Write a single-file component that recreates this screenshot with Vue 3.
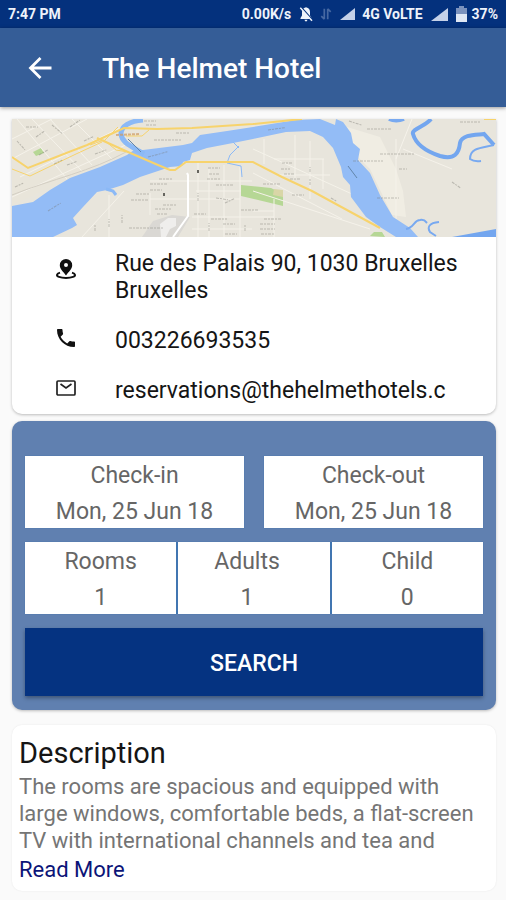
<script setup>
import { ref } from 'vue';

const hotel = {
  name: 'The Helmet Hotel',
  address: 'Rue des Palais 90, 1030 Bruxelles Bruxelles',
  phone: '003226693535',
  email: 'reservations@thehelmethotels.c',
};

const dates = ref([
  { label: 'Check-in', value: 'Mon, 25 Jun 18' },
  { label: 'Check-out', value: 'Mon, 25 Jun 18' },
]);
const guests = ref([
  { label: 'Rooms', value: 1 },
  { label: 'Adults', value: 1 },
  { label: 'Child', value: 0 },
]);

// faint street labels: x, y, length, angle
const labels = [
  [14, 8, 12, 0], [5, 22, 12, 48], [24, 18, 10, -35], [40, 6, 14, 40], [58, 8, 12, -35], [27, 36, 10, -30],
  [72, 22, 10, -25], [42, 45, 9, -25], [55, 46, 10, -20], [83, 35, 12, -20], [3, 68, 9, -25], [132, 2, 12, 0],
  [134, 6, 10, 0], [164, 14, 14, 0], [142, 21, 28, 0], [147, 60, 14, 0], [138, 65, 18, 0], [138, 71, 12, 0],
  [124, 75, 13, 0], [119, 81, 17, 0], [196, 49, 12, 0], [197, 55, 11, 0], [195, 60, 14, 0], [204, 66, 18, 0],
  [151, 86, 14, 0], [143, 90, 16, 0], [145, 95, 10, 0], [182, 95, 12, 0], [199, 100, 16, 0], [211, 105, 12, 0],
  [204, 79, 12, 8], [213, 84, 10, -25], [229, 91, 18, 0], [213, 115, 12, 0], [117, 109, 34, 0], [186, 82, 8, -90],
  [97, 108, 8, -90], [83, 112, 7, -90], [110, 104, 8, -90], [197, 112, 8, -90], [233, 112, 7, -90],
  [270, 44, 10, 0], [269, 50, 9, 0], [272, 55, 11, 0], [278, 60, 11, 0], [251, 65, 17, 0], [280, 76, 12, 0],
  [298, 53, 5, -90], [298, 66, 7, -90], [319, 79, 7, 30], [252, 100, 18, 0], [248, 105, 15, 0], [248, 110, 15, 0],
  [249, 115, 14, 0], [337, 2, 14, 18], [355, 10, 24, 0], [368, 35, 34, 0], [341, 42, 30, 0], [387, 50, 8, 0],
  [365, 79, 22, 0], [440, 63, 10, 35], [448, 3, 20, 0], [256, 11, 18, -8], [136, 38, 20, -15], [36, 92, 15, -32],
];
</script>

<template>
  <div class="screen">
    <div class="status">
      <span>7:47 PM</span>
      <div class="status-right">
        <span class="speed">0.00K/s</span>
        <svg class="bell" width="15" height="16" viewBox="0 0 15 16" aria-hidden="true">
          <path d="M7 1.2c-3 .5-4 2.700-4 5v3.300L1.500 12v1h11v-1L11 9.500V6.200c0-2.300-1-4.500-4-5z" fill="#eef3fb" />
          <path d="M5.500 13.800h3q-.3 1.700-1.500 1.700t-1.500-1.700z" fill="#eef3fb" />
          <path d="M2.500 1.500l11.500 13" stroke="#04317d" stroke-width="1.500" />
          <path d="M1.300 1.800l11.700 13" stroke="#eef3fb" stroke-width="1.500" />
        </svg>
        <svg class="updown" width="12" height="14" viewBox="0 0 14 14" fill="none" stroke="#4668a2" stroke-width="2" aria-hidden="true">
          <path d="M5 1v12M5 13L1.500 9.500M9 13V1M9 1l3.500 3.500" />
        </svg>
        <svg class="signal" width="15" height="12" viewBox="0 0 16 12" preserveAspectRatio="none" aria-hidden="true"><path d="M0 12L16 0v12z" fill="#c5d1e8" /></svg>
        <span class="network">4G VoLTE</span>
        <svg class="signal" width="17" height="13" viewBox="0 0 17 13" aria-hidden="true"><path d="M0 13L17 0v13z" fill="#c5d1e8" /></svg>
        <svg class="battery" width="11" height="16" viewBox="0 0 11 16" aria-hidden="true">
          <path d="M3 0h5v2h3v6H0V2h3z" fill="#7b92bd" />
          <path d="M0 8h11v8H0z" fill="#dfe7f4" />
        </svg>
        <span>37%</span>
      </div>
    </div>

    <header class="bar">
      <button class="back" type="button" aria-label="Back">
        <svg width="24" height="24" viewBox="0 0 24 24" fill="none" stroke="#fff" stroke-width="2.800">
          <path d="M23.500 12H2.500M12.500 2L2.500 12l10 10" />
        </svg>
      </button>
      <h1>{{ hotel.name }}</h1>
    </header>

    <main>
      <section class="card contact">
        <svg class="map" viewBox="0 0 484 118" preserveAspectRatio="xMidYMid slice" role="img" aria-label="Map">
          <rect width="484" height="118" fill="#e8e5dc" />
          <path d="M0 0H130L115 34L0 86z" fill="#e9e5da" />
          <path d="M335 8L368 18L384 50L391 72L394 98L380 96L358 50L346 38z" fill="#f0ede3" />
          <path d="M141 102L160 96L178 98L166 118H130z" fill="#dad8d4" />
          <path d="M148 105l8-6h8v8l-6 3-4 8h-5z" fill="#efeeec" />
          <path d="M21 33l8-4 3 5-8 3zM229 66l30 3 12 6v12l-42-10zM358 117l4-4h8l3 5z" fill="#b6d795" />
          <path d="M262 70l9 1v7l-10-2z" fill="#d9d6a7" />
          <g fill="none" stroke="#f5f2ea" stroke-width="1">
            <path d="M5 0L55 60M20 0L70 52M38 0L80 46M60 0L100 40M0 20L40 0M0 40L75 0M8 58L110 8M0 78L118 24" />
            <path d="M138 62H240M138 74V96M97 76V118M70 118L112 72M186 44V118M197 50V118M212 46V118M228 48V118M138 80H228M180 98H262M184 72H229M180 110H240" />
            <path d="M241 30L340 75M252 20V45M283 16V60M298 22V80M311 40V70M262 40H312M265 56H318M241 54L330 100M241 72L358 110M262 80V118M241 92H262" />
            <path d="M384 20V100M391 30L440 50M400 0L384 40" />
          </g>
          <path d="M0 76C40 60 80 52 114 33" fill="none" stroke="#d3cec3" stroke-width="1" />
          <path d="M175 54l1 2v41l-15 21" fill="none" stroke="#fff" stroke-width="2" />
          <path
            d="M0 87L21 83L38 71L58 59L88 48L115 36L122 31L131 31L171 26L180 24L188 16L215 12L241 8L284 1L308 0L323 6L324 0L331 3L339 14L341 24L348 30L346 41L358 54L368 76L381 98L398 109L406 118H384L368 108L354 98L339 78L338 66L331 58L329 48L321 29L311 18L298 12L274 13L241 20L221 24L195 29L180 34L178 41L171 43L170 47L158 48L128 58L111 66L95 71L85 73L71 88L61 99L65 106L60 109L41 118H0z"
            fill="#93bcf6"
          />
          <g fill="none" stroke="#8bb9f6">
            <path d="M131 1C118 2 109 7 109 15C110 24 119 27 132 35" stroke-width="5" />
            <path d="M94 70l7 2 3 4" stroke-width="3" />
            <path d="M221 23l6 6M227 27l-9 9-3 8 14 3 1 11" stroke-width="1" />
            <path d="M377 0q7 3 15 0" stroke-width="4" stroke="#78a9f0" />
            <path d="M419 0C414 7 399 10 401 15C404 26 416 33 428 37C443 41 447 34 448 24C450 15 465 16 472 15L482 26" stroke-width="4" stroke="#73a6ef" />
            <path d="M482 26C468 29 458 29 458 40q4 3 11 2" stroke-width="2" stroke="#78a9f0" />
            <path d="M394 110C402 109 402 101 408 101C413 100 414 103 415 104M427 103c-10 1-12 5-9 10l6 4" stroke-width="2" stroke="#78a9f0" />
          </g>
          <path d="M440 118L484 110v8z" fill="#73a6ef" />
          <g fill="none" stroke="#f7d36c" stroke-width="2">
            <path d="M0 38L16 49L75 26L112 9L145 10L180 9L241 5L290 0" />
            <path d="M0 50L18 57L64 35L90 23M114 17H130L137 11" stroke-width="1" />
            <path d="M85 19L116 33L146 46L158 51H163L174 43H241L270 58L300 72L368 109" />
            <path d="M78 26l14-5 12 10 12 2M92 22l14-14" stroke-width="1" />
            <path d="M472 0h12" />
          </g>
          <path d="M104 16l24-1" stroke="#cf9a62" stroke-width="2" stroke-dasharray="3 1" opacity="0.7" />
          <path d="M116 20l13 13M336 47l9 12" stroke="#6285aa" stroke-width="1" />
          <g stroke="#77766f" stroke-width="1" stroke-dasharray="3 1 2 1" opacity="0.4">
            <line
              v-for="(l, i) in labels"
              :key="i"
              :x1="l[0]"
              :y1="l[1]"
              :x2="l[0] + l[2]"
              :y2="l[1]"
              :transform="`rotate(${l[3]} ${l[0]} ${l[1]})`"
            />
          </g>
          <path d="M185 51h2v3h-2zM151 74h2v3h-2z" fill="#66655f" />
        </svg>

        <address class="details">
          <div class="detail">
            <svg class="icon" width="20" height="20" viewBox="0 0 20 20" aria-hidden="true">
              <path d="M10 0a6.200 6.200 0 0 0-6.200 6.200c0 4.300 3.700 6.300 6.200 10.300 2.500-4 6.200-6 6.200-10.300A6.200 6.200 0 0 0 10 0zm0 4a2 2 0 1 1 0 4 2 2 0 0 1 0-4z" fill-rule="evenodd" />
              <path d="M4 13.600C0 14.800.3 17 3 17.900c3.500 1.300 10.500 1.300 14 0 2.700-.9 3-3.100-1-4.300" fill="none" stroke="#111" stroke-width="2" />
            </svg>
            <span>{{ hotel.address }}</span>
          </div>
          <div class="detail">
            <svg class="icon" width="20" height="20" viewBox="2 2 20 20" aria-hidden="true">
              <path d="M6.620 10.790c1.440 2.830 3.760 5.140 6.590 6.590l2.200-2.200c.27-.27.670-.36 1.020-.24 1.120.37 2.330.57 3.570.57.550 0 1 .45 1 1V20c0 .55-.45 1-1 1-9.390 0-17-7.610-17-17 0-.55.450-1 1-1h3.500c.55 0 1 .45 1 1 0 1.250.2 2.450.57 3.570.11.350.030.740-.25 1.020l-2.200 2.200z" />
            </svg>
            <a :href="`tel:${hotel.phone}`">{{ hotel.phone }}</a>
          </div>
          <div class="detail">
            <svg class="icon" width="20" height="20" viewBox="0 0 20 20" fill="none" stroke="#222" aria-hidden="true">
              <rect x="1" y="3" width="18" height="14" rx="1" stroke-width="1.700" />
              <path d="M4.500 6l5.500 4 5.500-4" stroke-width="1.700" />
            </svg>
            <a :href="`mailto:${hotel.email}`">{{ hotel.email }}</a>
          </div>
        </address>
      </section>

      <section class="card booking">
        <div class="dates">
          <button v-for="d in dates" :key="d.label" class="field" type="button">
            <span>{{ d.label }}</span>
            <span>{{ d.value }}</span>
          </button>
        </div>
        <div class="guests">
          <button v-for="g in guests" :key="g.label" class="field" type="button">
            <span>{{ g.label }}</span>
            <span>{{ g.value }}</span>
          </button>
        </div>
        <button class="search" type="button">SEARCH</button>
      </section>

      <section class="card description">
        <h2>Description</h2>
        <p>The rooms are spacious and equipped with large windows, comfortable beds, a flat-screen TV with international channels and tea and</p>
        <a href="#">Read More</a>
      </section>
    </main>
  </div>
</template>

<style>
body { margin: 0; background: #fafafa; }
</style>

<style scoped>
.screen { min-height: 100vh; background: #fafafa; color: #151515; font-family: Roboto, sans-serif; font-size: 23px; line-height: 27px; }
button { margin: 0; padding: 0; border: 0; border-radius: 0; font: inherit; cursor: pointer; }
a { color: inherit; text-decoration: none; }
h1, h2, p { margin: 0; }

.status { display: flex; align-items: center; justify-content: space-between; height: 28px; padding: 0 8px; background: #04317d; color: #eef3fb; font-size: 14px; font-weight: 700; line-height: 28px; white-space: nowrap; }
.status-right { display: flex; align-items: center; }
.bell { margin-left: 8px; }
.updown { margin-left: 6px; }
.signal { margin-left: 8px; }
.network { margin-left: 7px; }
.battery { margin: 0 5px 0 8px; }

.bar { display: flex; align-items: center; height: 79px; padding-left: 28px; background: #355d97; color: #fff; box-shadow: 0 1px 4px rgba(0, 0, 0, 0.4); }
.back { display: flex; width: 74px; background: none; }
h1 { padding-top: 3px; font-size: 28px; font-weight: 500; line-height: 36px; }

main { display: flex; flex-direction: column; padding: 12px 10px 9px 12px; }
.card { border-radius: 10px; background: #fff; box-shadow: 0 1px 3px rgba(0, 0, 0, 0.25); }

.contact { overflow: hidden; border-radius: 0 0 10px 10px; }
.map { display: block; width: 100%; height: 118px; }
.details { display: flex; flex-direction: column; gap: 23px; padding: 13px 32px 10px 44px; font-style: normal; }
.detail { display: flex; align-items: flex-start; }
.icon { flex: none; margin: 9px 39px 0 0; fill: #111; }
.detail:nth-child(n + 2) .icon { margin-top: 1px; }
.detail:nth-child(3) .icon { fill: none; }

.booking { display: flex; flex-direction: column; gap: 14px; margin-top: 7px; padding: 35px 13px 14px; background: #6080b0; }
.dates { display: grid; grid-template-columns: 1fr 1fr; gap: 20px; }
.guests { display: grid; grid-template-columns: repeat(3, 1fr); gap: 2px; background: #4377b2; }
.field { display: flex; flex-direction: column; align-items: center; height: 72px; padding-top: 2px; background: #fff; color: #666; line-height: 36px; box-shadow: 0 0 1px #3f70ad; }
.guests .field:nth-child(2) { padding-right: 14px; }
.search { height: 68px; padding-top: 2px; background: #053381; color: #fff; font-weight: 500; box-shadow: 0 2px 4px rgba(0, 0, 0, 0.35); }

.description { margin-top: 15px; padding: 10px 7px 8px; box-shadow: 0 0 2px rgba(0, 0, 0, 0.08); font-size: 22px; }
h2 { font-size: 29px; font-weight: 400; line-height: 36px; }
.description p { margin-top: 2px; color: #757575; }
.description a { display: block; margin-top: 2px; color: #0b1478; }
</style>
